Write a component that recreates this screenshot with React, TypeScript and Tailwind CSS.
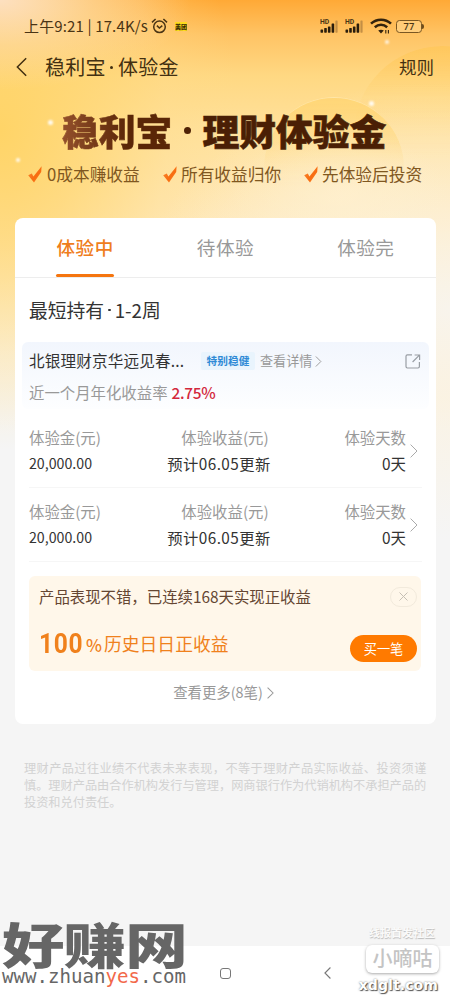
import React from 'react'
import clsx from 'clsx'

const TABS = ['体验中', '待体验', '体验完']

const HOLDINGS = [
  { id: 1, amount: '20,000.00', income: '预计06.05更新', days: '0天' },
  { id: 2, amount: '20,000.00', income: '预计06.05更新', days: '0天' },
]

interface ChevronProps {
  className?: string
  left?: boolean
  strokeWidth?: number
}

const Chevron = ({ className, left, strokeWidth = 1.2 }: ChevronProps): React.ReactNode => (
  <svg className={className} fill="none" stroke="currentColor" strokeWidth={strokeWidth} viewBox="0 0 8 14">
    <path d={left ? 'M7.4 0.6L1 7l6.4 6.4' : 'M0.6 0.6L7 7L0.6 13.4'} />
  </svg>
)

const Signal = (): React.ReactNode => (
  <svg className="h-[14px] w-[19px]" viewBox="0 0 19 14">
    <text x="0" y="5.4" fontSize="6.8" fontWeight="700" fontFamily="Roboto, sans-serif" fill="#4a3414">
      HD
    </text>
    <g fill="#2a1d0c">
      <rect x="0.5" y="10.4" width="2.6" height="3.3" rx="0.6" />
      <rect x="4.2" y="9" width="2.6" height="4.7" rx="0.6" />
      <rect x="7.9" y="7.4" width="2.6" height="6.3" rx="0.6" />
      <rect x="11.6" y="4.4" width="2.6" height="9.3" rx="0.6" />
    </g>
    <rect x="15.4" y="1.5" width="2.2" height="12.2" rx="0.6" fill="#c48f45" />
  </svg>
)

const StatusBar = (): React.ReactNode => (
  <div className="flex h-[52px] items-center pl-6 text-[#4a3414]">
    <span className="w-[127px] pb-px text-[15px] leading-none tracking-[0.14px] whitespace-pre">
      上午9:21 | 17.4K/s
    </span>
    <svg className="h-4 w-[17px]" fill="none" stroke="currentColor" strokeWidth="1.5" viewBox="0 0 17 16">
      <circle cx="8.5" cy="8.8" r="5.8" />
      <path d="M1 4.4L4.6 1M16 4.4L12.4 1M5.9 7.6L8.4 10l2.9-2.4" />
    </svg>
    <span className="ml-[7px] h-[9px] w-3 overflow-hidden bg-[#fddc1c] text-center text-[6px] leading-[9px] font-black whitespace-nowrap text-[#3a2c05]">
      美团
    </span>
    <div className="ml-auto flex items-center pr-[26px]">
      <Signal />
      <span className="w-[6px]" />
      <Signal />
      <svg className="ml-[6px] h-4 w-[22px]" viewBox="0 0 22 16" fill="none" stroke="#33230d">
        <path d="M1 5.6C6.6 0.4 15.4 0.4 21 5.6" strokeWidth="2.6" />
        <path d="M4.8 9.2c3.6-3.2 8.8-3.2 12.4 0" strokeWidth="2.5" />
        <path d="M8.2 12.6c1.8-1.3 3.8-1.3 5.6 0L11 15.4z" fill="#33230d" stroke="none" />
        <path d="M15.8 12v3.6M18.4 12v3.6" strokeWidth="1.1" />
      </svg>
      <span className="ml-1 flex h-[13px] w-[26px] items-center justify-center rounded-[3.5px] border-[1.5px] border-[#7a5722] bg-[#ffdb9a]/50 pt-px font-[Roboto] text-[9.5px] leading-none font-medium">
        77
      </span>
      <span className="h-[5px] w-[2px] rounded-r bg-[#6d4c1c]" />
    </div>
  </div>
)

const NavBar = (): React.ReactNode => (
  <div className="flex h-[30px] items-center pr-4 pl-4 text-[#433011]">
    <Chevron className="h-5 w-[11px]" left strokeWidth={1.1} />
    <h1 className="ml-[18px] flex items-center text-[20px] leading-none tracking-[0.3px]">
      稳利宝
      <span className="mr-[5px] ml-1 size-[3px] rounded-full bg-current" />
      体验金
    </h1>
    <span className="ml-auto text-[17.5px] leading-none">规则</span>
  </div>
)

const Tick = (): React.ReactNode => (
  <svg className="h-[17px] w-[14px] shrink-0" viewBox="0 0 14 17">
    <defs>
      <linearGradient id="tick" x1="0" y1="0" x2="1" y2="1">
        <stop offset="0" stopColor="#f98b34" />
        <stop offset="0.6" stopColor="#f86c10" />
        <stop offset="1" stopColor="#f98d30" />
      </linearGradient>
    </defs>
    <path d="M0.2 9.2L3.8 7.6L5.4 10.6L13.6 0.2L13.2 6L6 16.4Z" fill="url(#tick)" />
  </svg>
)

const Hero = (): React.ReactNode => (
  <div className="h-[136px] pt-[29px]">
    <h2 className="flex h-[38px] items-center pl-[62px] text-[36.8px] leading-[52px] font-black">
      <span className="bg-linear-to-r from-[#94502b] to-[#5a2607] to-60% bg-clip-text text-transparent [-webkit-text-stroke:0.6px_transparent]">
        稳利宝
      </span>
      <span className="flex w-[30px] justify-center">
        <span className="size-[7px] rounded-full bg-[#4f2206]" />
      </span>
      <span className="text-[#4a1f05] [-webkit-text-stroke:0.6px_#4a1f05]">理财体验金</span>
    </h2>
    <ul className="mt-[15px] flex h-5 items-center pl-7 text-[16.7px] leading-none text-[#80571f]">
      <li className="flex w-[135px] items-center gap-[5px]">
        <Tick />
        0成本赚收益
      </li>
      <li className="flex w-[141px] items-center gap-1">
        <Tick />
        所有收益归你
      </li>
      <li className="flex items-center gap-1">
        <Tick />
        先体验后投资
      </li>
    </ul>
  </div>
)

const Tabs = (): React.ReactNode => (
  <div className="grid h-[60px] grid-cols-3 border-b border-[#ededed]">
    {TABS.map((tab, i) => (
      <div
        key={tab}
        className={clsx(
          'relative flex items-center justify-center text-[18.6px] leading-none tracking-[0.5px]',
          i === 0 ? 'font-medium text-[#ef7d1c]' : 'text-[#999]',
        )}
      >
        {tab}
        {i === 0 && <span className="absolute bottom-0 h-[3.5px] w-[58px] rounded-full bg-[#f5750f]" />}
      </div>
    ))}
  </div>
)

const Product = (): React.ReactNode => (
  <div className="mx-[7px] h-[67px] rounded-md bg-linear-to-b from-[#f2f6fd] to-[#fdfeff] pr-2 pl-[7px] pt-[9px]">
    <div className="flex h-5 items-center leading-none">
      <span className="w-[172px] text-[15.6px] tracking-[0.15px] text-[#333]">北银理财京华远见春...</span>
      <span className="flex h-[18px] w-[54px] items-center justify-center rounded-xs bg-[#e9f4fd] text-[10.7px] font-bold text-[#2e8ad6]">
        特别稳健
      </span>
      <span className="ml-[5px] text-[13.1px] text-[#999]">查看详情</span>
      <Chevron className="ml-[3px] h-[11px] w-[7px] text-[#999]" />
      <svg className="ml-auto h-[15px] w-[16px] text-[#999ea4]" viewBox="0 0 16 15" fill="none" stroke="currentColor" strokeWidth="1.2">
        <path d="M7 0.8H2.4Q1 0.8 1 2.2v10.4Q1 14 2.4 14H13q1.4 0 1.4-1.4V8M9.6 1H14.6V6M14.4 1.2L7.6 8" />
      </svg>
    </div>
    <div className="mt-3 flex h-5 items-center leading-none">
      <span className="text-[15.4px] text-[#999]">近一个月年化收益率</span>
      <span className="ml-1 text-[15.4px] font-medium tracking-[-0.3px] text-[#d3283c]">2.75%</span>
    </div>
  </div>
)

const Holding = ({ amount, income, days }: (typeof HOLDINGS)[number]): React.ReactNode => (
  <div className="mx-[14px] flex h-[74px] items-center border-b border-[#f6f6f6] text-[15.4px] leading-none text-[#333]">
    <div className="flex w-[104px] flex-col gap-[11px]">
      <span className="text-[#999]">体验金(元)</span>
      <span className="h-[15px] text-[14.2px] leading-[15px]">{amount}</span>
    </div>
    <div className="flex w-[172px] flex-col items-center gap-[11px]">
      <span className="pl-3 text-[#999]">体验收益(元)</span>
      <span className="text-[15.3px] tracking-[0.45px]">{income}</span>
    </div>
    <div className="ml-auto flex flex-col items-end gap-[11px]">
      <span className="text-[#999]">体验天数</span>
      <span>{days}</span>
    </div>
    <Chevron className="mr-1 ml-1 h-[14px] w-2 text-[#aaa]" strokeWidth={1} />
  </div>
)

const Promo = (): React.ReactNode => (
  <div className="mr-[15px] ml-[14px] mt-[14px] h-[95px] rounded-md bg-[#fff7ea] pr-1 pl-[10px]">
    <div className="flex h-[41px] items-center justify-between text-[15.4px] leading-none text-[#654632]">
      <span>产品表现不错，已连续168天实现正收益</span>
      <span className="flex h-5 w-[27px] items-center justify-center rounded-full border border-[#f2eadc]">
        <svg className="size-[9px]" viewBox="0 0 9 9" stroke="#c6bfb4" strokeWidth="1">
          <path d="M0.5 0.5l8 8M8.5 0.5l-8 8" />
        </svg>
      </span>
    </div>
    <div className="flex h-[54px] items-center text-[#f0811c]">
      <span className="w-[47px] pt-px font-[Roboto]">
        <span className="inline-block origin-left scale-x-[.86] text-[28.5px] leading-none font-bold tracking-[0.8px]">
          100
        </span>
      </span>
      <span className="w-[18px] text-[17px] leading-none font-medium">%</span>
      <span className="text-[17.8px] leading-none">历史日日正收益</span>
      <button className="mt-2 ml-auto h-[27px] w-[67px] rounded-full bg-[#ff7a00] text-[13.2px] leading-[25px] text-white">
        买一笔
      </button>
    </div>
  </div>
)

const Watermarks = (): React.ReactNode => (
  <>
    <div className="absolute top-[920px] left-[2px] text-[#666]">
      <div className="h-[48px]">
        <p className="origin-top scale-y-[.78] text-[62.5px] leading-[60px] font-black tracking-[-0.9px] whitespace-nowrap">
          好赚网
        </p>
      </div>
      <p className="font-['DejaVu_Sans_Mono'] text-[19.1px] leading-[18px] [text-shadow:0_0_2px_#fff]">
        www.zhuan<span className="text-[#f2694a]">yes</span>.com
      </p>
    </div>
    <div className="absolute top-[925px] right-[11px] flex w-[80px] flex-col items-end">
      <p className="pr-1 text-[11px] leading-[14px] font-bold whitespace-nowrap text-[#fafafa] [text-shadow:0.5px_0.5px_1px_#bbb]">
        线报首发社区
      </p>
      <p className="mt-[6px] h-[28px] w-[73px] rounded-md bg-white text-center text-[20px] leading-[26px] font-medium text-[#c4c4c4] shadow-[0_1px_3px_#aaa]">
        小嘀咕
      </p>
      <p className="mt-[3px] pr-px font-['DejaVu_Sans'] text-[14px] leading-[18px] font-bold tracking-[0.1px] text-white [text-shadow:1px_1px_1px_#555,0_0_2px_#777]">
        xdglt.com
      </p>
    </div>
  </>
)

const Backdrop = (): React.ReactNode => (
  <div className="absolute inset-0 -z-10 overflow-hidden bg-[linear-gradient(180deg,#ffa936_0px,#ffc465_35px,#ffd882_75px,#ffe19c_130px,#ffe7b4_210px,#fcf0d6_310px,#f5f5f5_430px)]">
    <div className="absolute inset-0 bg-[radial-gradient(ellipse_240px_320px_at_0px_130px,#ffd467_0%,#ffd670b3_35%,#ffdc8a4d_70%,#ffe09a00_100%)]" />
    <div className="absolute inset-0 bg-[radial-gradient(ellipse_190px_90px_at_0px_0px,#fde0c0_0%,#fddbb080_50%,#fdd9a600_100%)]" />
    <div className="absolute inset-0 bg-[radial-gradient(ellipse_320px_230px_at_450px_310px,#f8f4ec_0%,#fcf2deb3_40%,#fdf0d800_100%)]" />
    <div className="absolute top-[46px] left-[354px] size-[176px] rounded-full bg-[linear-gradient(180deg,#ffc75acc_0%,#ffd98480_30%,#ffe09a00_65%)] mask-b-from-10% mask-b-to-70%" />
    <div className="absolute top-[97px] left-[264px] size-[140px] rounded-full border-t border-[#ffe9b4]/70 bg-[linear-gradient(180deg,#ffd678_0%,#ffe3a800_65%)] mask-b-from-10% mask-b-to-80%" />
    <div className="absolute top-[130px] right-0 h-[130px] w-[220px] bg-[radial-gradient(ellipse_at_center,#fff1d199_0%,#fff1d100_70%)]" />
    <span className="absolute top-[120px] left-[48px] size-[5px] rounded-full bg-white/90 blur-[1px]" />
    <span className="absolute top-[158px] left-[16px] size-[4px] rounded-full bg-white/90 blur-[1px]" />
    <span className="absolute top-[40px] left-[385px] size-[4px] rounded-full bg-white/80 blur-[1px]" />
    <span className="absolute top-[101px] left-[369px] size-[5px] rounded-full bg-white/90 blur-[1px]" />
  </div>
)

const App = (): React.ReactNode => (
  <div className="relative isolate flex h-[1000px] w-[450px] flex-col overflow-hidden font-['Noto_Sans_CJK_SC',sans-serif]">
    <Backdrop />
    <StatusBar />
    <NavBar />
    <Hero />
    <main className="mr-[14px] ml-[15px] h-[506px] rounded-lg bg-white">
      <Tabs />
      <h3 className="flex h-[64px] items-center pl-[14px] text-[18.8px] leading-none text-[#333]">
        最短持有
        <span className="mr-[4px] ml-1 size-[2.5px] rounded-full bg-current" />
        1-2周
      </h3>
      <Product />
      <div className="mt-[5px]">
        {HOLDINGS.map((holding) => (
          <Holding key={holding.id} {...holding} />
        ))}
      </div>
      <Promo />
      <div className="flex h-[43px] items-center justify-center gap-1 pr-1 text-[14.4px] leading-none text-[#999]">
        查看更多(8笔)
        <Chevron className="h-3 w-[7px]" />
      </div>
    </main>
    <div className="mt-9 pl-6 text-[12.2px] leading-[17px] whitespace-nowrap text-[#d2d2d2]">
      <p className="tracking-[0.4px]">理财产品过往业绩不代表未来表现，不等于理财产品实际收益、投资须谨</p>
      <p>慎。理财产品由合作机构发行与管理，网商银行作为代销机构不承担产品的</p>
      <p>投资和兑付责任。</p>
    </div>
    <footer className="mt-auto flex h-[54px] items-center bg-white text-[#777]">
      <span className="ml-[220px] size-[11px] rounded-[3px] border border-[#777]" />
      <Chevron className="ml-[93px] h-3 w-[7px]" left strokeWidth={1.3} />
    </footer>
    <Watermarks />
  </div>
)

export default App
